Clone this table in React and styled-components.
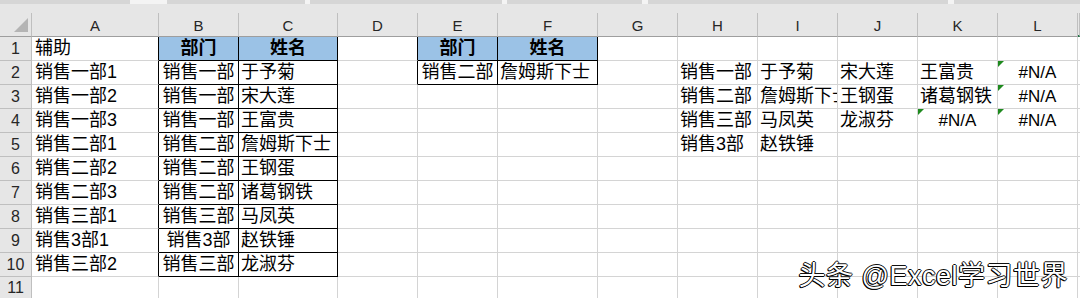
import React from "react";
import styled, { createGlobalStyle, css } from "styled-components";

const GlobalStyle = createGlobalStyle`
  html, body {
    margin: 0;
    padding: 0;
    background: #ffffff;
  }
  body {
    font-family: "Liberation Sans", "Noto Sans CJK SC", sans-serif;
    overflow: hidden;
  }
`;

const COLS = "32px 127px 80px 99px 80px 80px 100px 80px 80px 80px 80px 80px 80px 1fr";
const GRID = "#d4d4d4";
const HEAD_BG = "#e6e6e6";
const HEAD_LINE = "#bfbfbf";

const Sheet = styled.div`
  position: relative;
  width: 1080px;
  height: 298px;
  overflow: hidden;
  background: #fff;
  display: flex;
  flex-direction: column;
`;

const TopStrip = styled.div`
  height: 13px;
  flex: none;
  background: ${HEAD_BG};
  display: flex;
  align-items: flex-start;
`;

const StripPiece = styled.div`
  height: 4px;
  width: ${(p) => p.$w}px;
  flex: none;
  background: ${(p) => (p.$light ? "#f4f4f4" : "#d6d6d6")};
`;

const Row = styled.div`
  display: grid;
  grid-template-columns: ${COLS};
  height: ${(p) => p.$h || 24}px;
  flex: none;
`;

const ColHead = styled.div`
  box-sizing: border-box;
  background: ${HEAD_BG};
  border-right: 1px solid ${HEAD_LINE};
  border-bottom: ${(p) => (p.$green ? "2px solid #217346" : "1px solid #9e9e9e")};
  display: flex;
  align-items: center;
  justify-content: center;
  font-family: "Liberation Sans", sans-serif;
  font-size: 15px;
  color: #262626;
  padding-top: 1px;
`;

const Corner = styled(ColHead)`
  justify-content: flex-end;
  align-items: flex-end;
  padding: 0 3px 4px 0;
`;

const RowHead = styled.div`
  box-sizing: border-box;
  background: ${HEAD_BG};
  border-right: 1px solid ${HEAD_LINE};
  border-bottom: 1px solid ${HEAD_LINE};
  display: flex;
  align-items: center;
  justify-content: center;
  font-family: "Liberation Sans", sans-serif;
  font-size: 16px;
  color: #262626;
`;

const Cell = styled.div`
  position: relative;
  box-sizing: border-box;
  min-width: 0;
  overflow: hidden;
  white-space: nowrap;
  border-right: 1px solid ${(p) => (p.$br ? "#000" : GRID)};
  border-bottom: 1px solid ${(p) => (p.$bb ? "#000" : GRID)};
  padding: 0 ${(p) => (p.$pad != null ? p.$pad : 2)}px;
  font-size: 18px;
  line-height: 23px;
  color: #000;
  text-align: ${(p) => p.$align || "left"};
  ${(p) =>
    p.$head &&
    css`
      background: #9bc2e6;
      font-weight: 700;
      text-align: center;
    `}
`;

const ErrorFlag = styled.span`
  position: absolute;
  left: 0;
  top: 0;
  width: 0;
  height: 0;
  border-top: 6px solid #1e8a1e;
  border-right: 6px solid transparent;
`;

const ErrorText = styled.span`
  font-family: "Liberation Sans", sans-serif;
  font-size: 17px;
`;

const Watermark = styled.div`
  position: absolute;
  right: 12px;
  bottom: 8px;
  font-family: "Liberation Sans", "Noto Sans CJK SC", sans-serif;
  font-size: 27px;
  line-height: 27px;
  letter-spacing: 0.5px;
  color: #ffffff;
  text-shadow: -1px 0 0 #000, 0 1px 0 #000, 1px 0 0 #111, 0 -1px 0 #111,
    -1px 1px 0 #000;
  white-space: nowrap;
  pointer-events: none;
`;

const LETTERS = ["A", "B", "C", "D", "E", "F", "G", "H", "I", "J", "K", "L"];

const ERR = "#N/A";

// Sheet contents, one array per row (columns A..L)
const DATA = [
  ["辅助", "部门", "姓名", "", "部门", "姓名", "", "", "", "", "", ""],
  ["销售一部1", "销售一部", "于予菊", "", "销售二部", "詹姆斯下士", "", "销售一部", "于予菊", "宋大莲", "王富贵", ERR],
  ["销售一部2", "销售一部", "宋大莲", "", "", "", "", "销售二部", "詹姆斯下士", "王钢蛋", "诸葛钢铁", ERR],
  ["销售一部3", "销售一部", "王富贵", "", "", "", "", "销售三部", "马凤英", "龙淑芬", ERR, ERR],
  ["销售二部1", "销售二部", "詹姆斯下士", "", "", "", "", "销售3部", "赵铁锤", "", "", ""],
  ["销售二部2", "销售二部", "王钢蛋", "", "", "", "", "", "", "", "", ""],
  ["销售二部3", "销售二部", "诸葛钢铁", "", "", "", "", "", "", "", "", ""],
  ["销售三部1", "销售三部", "马凤英", "", "", "", "", "", "", "", "", ""],
  ["销售3部1", "销售3部", "赵铁锤", "", "", "", "", "", "", "", "", ""],
  ["销售三部2", "销售三部", "龙淑芬", "", "", "", "", "", "", "", "", ""],
  ["", "", "", "", "", "", "", "", "", "", "", ""],
];

// Ranges framed with thin black borders: B1:C10 and E1:F2
function cellProps(r, c, v) {
  const p = {};
  const inLeft = r <= 10 && (c === 1 || c === 2);
  const inRight = r <= 2 && (c === 4 || c === 5);
  if (inLeft || inRight) {
    p.$br = true;
    p.$bb = true;
  }
  // right edge of the column just before each framed range
  if (r <= 10 && c === 0) p.$br = true;
  if (r <= 2 && c === 3) p.$br = true;
  if (r === 1 && (inLeft || inRight)) p.$head = true;
  if (c === 0) p.$pad = 3;
  if (c === 1 || c === 4 || v === ERR) p.$align = "center";
  return p;
}

const CornerMark = () => (
  <svg width="14" height="14" viewBox="0 0 14 14">
    <polygon points="14,0 14,14 0,14" fill="#b4b4b4" />
  </svg>
);

export default function App() {
  return (
    <>
      <GlobalStyle />
      <Sheet>
        <TopStrip>
          <StripPiece $w={130} />
          <StripPiece $w={37} $light />
          <StripPiece $w={138} />
          <StripPiece $w={5} $light />
          <StripPiece $w={192} />
          <StripPiece $w={5} $light />
          <StripPiece $w={135} />
          <StripPiece $w={6} $light />
          <StripPiece $w={300} />
          <StripPiece $w={6} $light />
          <StripPiece $w={126} />
        </TopStrip>
        <Row>
          <Corner>
            <CornerMark />
          </Corner>
          {LETTERS.map((l) => (
            <ColHead key={l}>{l}</ColHead>
          ))}
          <ColHead $green />
        </Row>
        {DATA.map((row, i) => {
          const r = i + 1;
          return (
            <Row key={r} $h={r === 11 ? 22 : 24}>
              <RowHead>{r}</RowHead>
              {row.map((v, c) => (
                <Cell key={c} {...cellProps(r, c, v)}>
                  {v === ERR ? (
                    <>
                      <ErrorFlag />
                      <ErrorText>{v}</ErrorText>
                    </>
                  ) : (
                    v
                  )}
                </Cell>
              ))}
              <Cell />
            </Row>
          );
        })}
        <Watermark>头条 @Excel学习世界</Watermark>
      </Sheet>
    </>
  );
}
